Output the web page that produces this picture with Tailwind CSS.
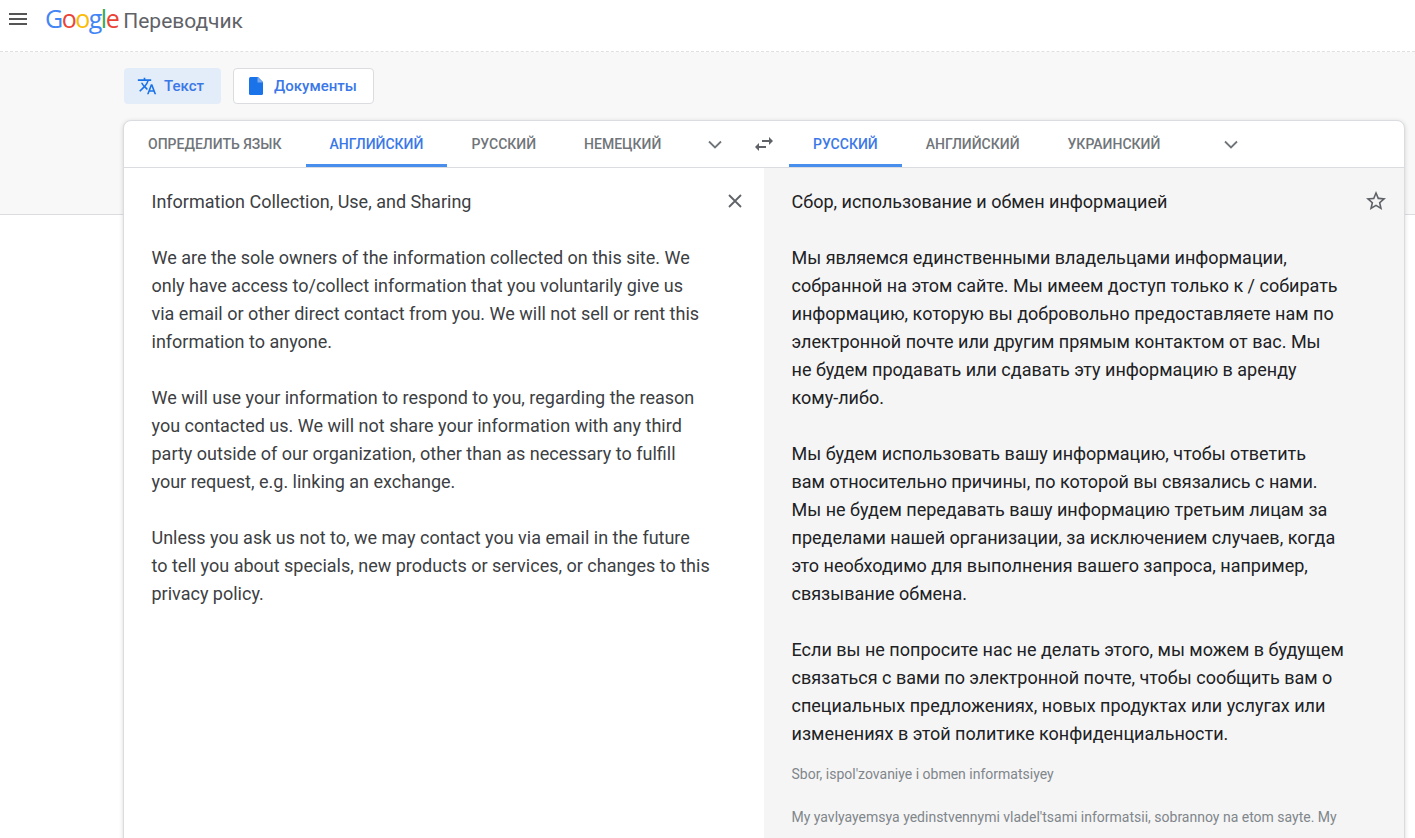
<!DOCTYPE html>
<html lang="ru">
<head>
<meta charset="utf-8">
<script src="https://cdn.jsdelivr.net/npm/@tailwindcss/browser@4"></script>
<title>Google Переводчик</title>
</head>
<body class="bg-white font-['Roboto',sans-serif]">
<div class="h-[838px] w-[1415px] overflow-hidden">
  <header class="flex h-[52px] items-start border-b border-dashed border-[#e0e0e0] bg-white">
    <button class="ml-[8px] mt-[10px] h-[18px] w-[20px]">
      <svg width="20" height="18" viewBox="0 0 20 18" fill="#555"><rect x="1" y="3" width="18" height="2"/><rect x="1" y="8" width="18" height="2"/><rect x="1" y="13" width="18" height="2"/></svg>
    </button>
    <div class="ml-[17px] mt-[3px] flex items-baseline">
      <span class="font-['Open_Sans',sans-serif] text-[25px] leading-[30px] tracking-[-1.5px]"><span class="text-[#4285f4]">G</span><span class="text-[#ea4335]">o</span><span class="text-[#fbbc05]">o</span><span class="text-[#4285f4]">g</span><span class="text-[#34a853]">l</span><span class="text-[#ea4335]">e</span></span>
      <span class="ml-[5px] text-[21px] leading-[30px] text-[#5f6368]">Переводчик</span>
    </div>
  </header>

  <section class="h-[163px] border-b border-[#dadce0] bg-[#f8f8f8] pl-[123px] pr-[10px]">
    <div class="flex h-[68px] items-start gap-[12px] pl-px pt-[16px]">
      <button class="flex h-[36px] w-[97px] items-center rounded-[4px] bg-[#e3ecf9] pl-[13px] text-[15px] font-medium text-[#3b78e7]">
        <svg width="20" height="20" viewBox="0 0 24 24" fill="#1a73e8"><path d="M12.87 15.07l-2.54-2.51.03-.03A17.52 17.52 0 0 0 14.07 6H17V4h-7V2H8v2H1v2h11.17C11.5 7.92 10.44 9.75 9 11.35 8.07 10.32 7.3 9.19 6.69 8h-2c.73 1.63 1.73 3.17 2.98 4.56l-5.09 5.02L4 19l5-5 3.11 3.11.76-2.04zM18.5 10h-2L12 22h2l1.12-3h4.75L21 22h2l-4.5-12zm-2.62 7l1.62-4.33L19.12 17h-3.24z"/></svg>
        <span class="ml-[7px]">Текст</span>
      </button>
      <button class="flex h-[36px] w-[141px] items-center rounded-[4px] border border-[#dadce0] bg-white pl-[13px] text-[15px] font-medium text-[#3b78e7]">
        <svg width="18" height="20" viewBox="0 0 18 20" fill="#1a73e8"><path d="M3.5 1h7.5l5 5v11.5A1.5 1.5 0 0 1 14.5 19h-11A1.5 1.5 0 0 1 2 17.5v-15A1.5 1.5 0 0 1 3.5 1z"/><path d="M10.5 1v5.5H16" fill="#7baaf0"/></svg>
        <span class="ml-[9px]">Документы</span>
      </button>
    </div>

    <div class="h-[740px] overflow-hidden rounded-t-[8px] border border-[#dadce0] bg-white shadow-[0_1px_4px_rgba(60,64,67,0.2)]">
      <div class="flex h-[47px] border-b border-[#dadce0]">
        <div class="flex w-[640px] items-stretch text-[14px] font-medium uppercase">
          <div class="flex items-center px-[24px] text-[#70757a]">Определить язык</div>
          <div class="flex items-center border-b-[3px] border-[#1a73e8]/80 px-[24px] pt-[3px] text-[#3b78e7]">Английский</div>
          <div class="flex items-center px-[24px] text-[#70757a]">Русский</div>
          <div class="flex items-center px-[24px] text-[#70757a]">Немецкий</div>
          <div class="ml-[21px] flex items-center">
            <svg width="18" height="18" viewBox="0 0 18 18" fill="none" stroke="#70757a" stroke-width="1.8"><path d="M3 6.5l6 6 6-6"/></svg>
          </div>
        </div>
        <div class="relative flex flex-1 items-stretch text-[14px] font-medium uppercase">
          <svg class="absolute left-[-12px] top-[11px]" width="24" height="24" viewBox="0 0 24 24" fill="#5f6368"><path d="M6.99 11L3 15l3.99 4v-3H14v-2H6.99v-3zM21 9l-3.99-4v3H10v2h7.01v3L21 9z"/></svg>
          <div class="ml-[25px] flex items-center border-b-[3px] border-[#1a73e8]/80 px-[24px] pt-[3px] text-[#3b78e7]">Русский</div>
          <div class="flex items-center px-[24px] text-[#70757a]">Английский</div>
          <div class="flex items-center px-[24px] text-[#70757a]">Украинский</div>
          <div class="ml-[38px] flex items-center">
            <svg width="18" height="18" viewBox="0 0 18 18" fill="none" stroke="#70757a" stroke-width="1.8"><path d="M3 6.5l6 6 6-6"/></svg>
          </div>
        </div>
      </div>
      <div class="grid h-full grid-cols-2 text-[18px] leading-[28px]">
        <div class="relative pl-[27.5px] pt-[20px] text-[#3c4043]">
          <p>Information Collection, Use, and Sharing</p>
          <p class="mt-[28px]">We are the sole owners of the information collected on this site. We<br>only have access to/collect information that you voluntarily give us<br>via email or other direct contact from you. We will not sell or rent this<br>information to anyone.</p>
          <p class="mt-[28px]">We will use your information to respond to you, regarding the reason<br>you contacted us. We will not share your information with any third<br>party outside of our organization, other than as necessary to fulfill<br>your request, e.g. linking an exchange.</p>
          <p class="mt-[28px]">Unless you ask us not to, we may contact you via email in the future<br>to tell you about specials, new products or services, or changes to this<br>privacy policy.</p>
          <svg class="absolute right-[20px] top-[24px]" width="18" height="18" viewBox="0 0 18 18" stroke="#5f6368" stroke-width="1.8"><path d="M3 3l12 12M15 3L3 15"/></svg>
        </div>
        <div class="relative bg-[#f5f5f5] pl-[27.5px] pt-[20px] text-[#202124]">
          <p>Сбор, использование и обмен информацией</p>
          <p class="mt-[28px]">Мы являемся единственными владельцами информации,<br>собранной на этом сайте. Мы имеем доступ только к / собирать<br>информацию, которую вы добровольно предоставляете нам по<br>электронной почте или другим прямым контактом от вас. Мы<br>не будем продавать или сдавать эту информацию в аренду<br>кому-либо.</p>
          <p class="mt-[28px]">Мы будем использовать вашу информацию, чтобы ответить<br>вам относительно причины, по которой вы связались с нами.<br>Мы не будем передавать вашу информацию третьим лицам за<br>пределами нашей организации, за исключением случаев, когда<br>это необходимо для выполнения вашего запроса, например,<br>связывание обмена.</p>
          <p class="mt-[28px]">Если вы не попросите нас не делать этого, мы можем в будущем<br>связаться с вами по электронной почте, чтобы сообщить вам о<br>специальных предложениях, новых продуктах или услугах или<br>изменениях в этой политике конфиденциальности.</p>
          <div class="mt-[14px] text-[14px] leading-[24px] text-[#80868b]">
            <p>Sbor, ispol'zovaniye i obmen informatsiyey</p>
            <p class="mt-[19px]">My yavlyayemsya yedinstvennymi vladel'tsami informatsii, sobrannoy na etom sayte. My</p>
          </div>
          <svg class="absolute right-[16px] top-[21px]" width="24" height="24" viewBox="0 0 24 24" fill="#5f6368"><path d="M22 9.24l-7.19-.62L12 2 9.19 8.63 2 9.24l5.46 4.73L5.82 21 12 17.27 18.18 21l-1.63-7.03L22 9.24zM12 15.4l-3.76 2.27 1-4.28-3.32-2.88 4.38-.38L12 6.1l1.71 4.04 4.38.38-3.32 2.88 1 4.28L12 15.4z"/></svg>
        </div>
      </div>
    </div>
  </section>
</div>
</body>
</html>
